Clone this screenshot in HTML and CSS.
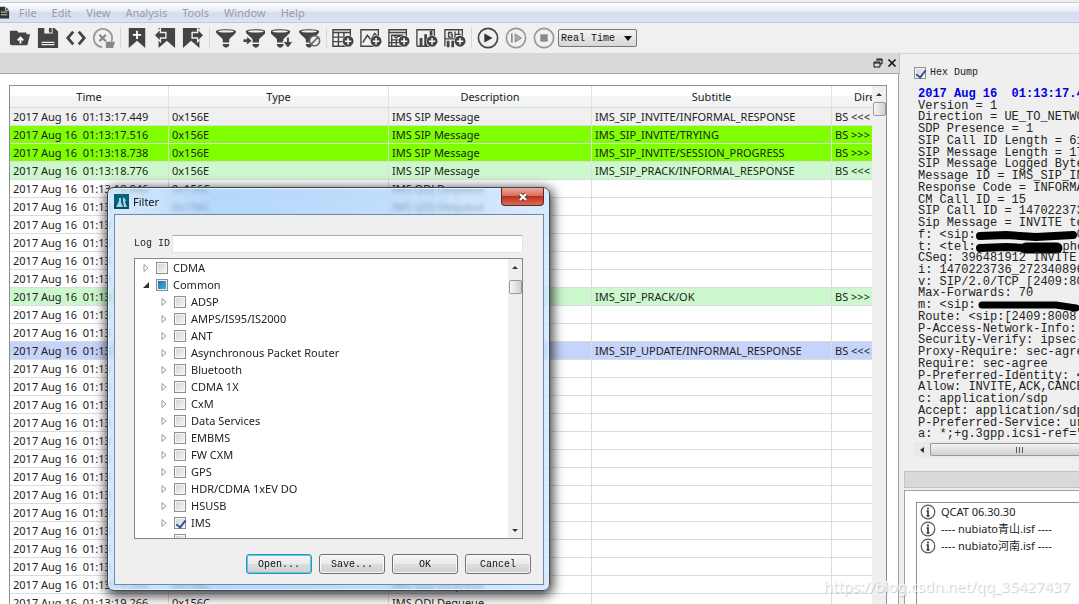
FILE: index.html
```
<!DOCTYPE html>
<html lang="en">
<head>
<meta charset="utf-8">
<title>QCAT</title>
<link rel="stylesheet" href="styles.css">
</head>
<body>
<svg class="defs" aria-hidden="true">
  <symbol id="funnel" viewBox="0 0 24 24"><path d="M1 5C1 1.500 23 1.500 23 5C23 8 15.500 12 15.500 14V17H8.500V14C8.500 12 1 8 1 5Z" fill="#444"/><ellipse cx="12" cy="4.800" rx="8.500" ry="1.300" fill="#f0f0f0"/><path d="M8.500 18.500h7v1.500q-1 2.500-3.500 2.500t-3.500-2.500Z" fill="#444"/></symbol>
  <symbol id="plus" viewBox="0 0 12 12"><circle cx="6" cy="6" r="6" fill="#f0f0f0"/><circle cx="6" cy="6" r="5.500" fill="#444"/><path d="M6 2.800v6.400M2.800 6h6.400" stroke="#fff" stroke-width="1.500"/></symbol>
  <symbol id="closed" viewBox="0 0 8 10"><path d="M2 1.500v7L6 5Z" fill="#fff" stroke="#999"/></symbol>
  <symbol id="open" viewBox="0 0 8 10"><path d="M7 2v6H1Z" fill="#333"/></symbol>
  <symbol id="info" viewBox="0 0 16 16"><circle cx="8" cy="8" r="6.800" fill="#fff" stroke="#555" stroke-width="1.200"/><path d="M8 3.500v2M6.500 7H8v4.500M6.500 12h3" stroke="#333" stroke-width="1.600" fill="none"/></symbol>
</svg>
<div class="app">
  <nav class="menu">
    <svg class="doc" viewBox="0 0 11 16"><path d="M0 1h6l4 4v9H0Z" fill="#333"/><path d="M6 1v4h4M1 7h7M1 10h7" stroke="#ddd" fill="none"/></svg>
    <a href="#">File</a><a href="#">Edit</a><a href="#">View</a><a href="#">Analysis</a><a href="#">Tools</a><a href="#">Window</a><a href="#">Help</a>
  </nav>
  <div class="toolbar">
    <button aria-label="Open"><svg viewBox="0 0 24 24"><path d="M1 4h8l1 2h9v3H5L3 19H1Z" fill="#444"/><path d="M5 8h18l-3 12H2Z" fill="#444"/><path d="M12.500 18v-5M9.500 14.500l3-3 3 3" stroke="#fff" stroke-width="2" fill="none"/></svg></button>
    <button aria-label="Save"><svg viewBox="0 0 24 24"><path d="M1 1h18l4 4v18H1Z" fill="#444"/><path d="M8 1h9v6H8ZM5 16h14v4H5Z" fill="#f0f0f0"/><path d="M13 1h3v5h-3ZM5 17.500h14v1H5Z" fill="#444"/></svg></button>
    <button aria-label="Parse"><svg viewBox="0 0 24 24"><path d="M9 5L3 12l6 7M15 5l6 7-6 7" stroke="#444" stroke-width="3" fill="none"/></svg></button>
    <button aria-label="Cancel refresh"><svg viewBox="0 0 24 24"><path d="M10 22A10 10 0 1 1 20 16" stroke="#999" stroke-width="2" fill="none"/><path d="M14 16h10l-2 7h-8Z" fill="#888"/><path d="M7 8.500l7 7M14 8.500l-7 7" stroke="#888" stroke-width="2.500"/></svg></button>
    <i></i>
    <button aria-label="Add bookmark"><svg viewBox="0 0 24 24"><path d="M3 1h18v22l-9-8-9 8Z" fill="#444"/><path d="M12 4v9M7.500 8.500h9" stroke="#fff" stroke-width="2"/></svg></button>
    <button aria-label="Previous bookmark"><svg viewBox="0 0 24 24"><path d="M5 1h18v22l-9-8-9 8Z" fill="#444"/><path d="M0 9l7-7v4h6v6H7v4Z" fill="#444" stroke="#f0f0f0" stroke-width="1.500"/></svg></button>
    <button aria-label="Next bookmark"><svg viewBox="0 0 24 24"><path d="M1 1h18v22l-9-8-9 8Z" fill="#444"/><path d="M24 9l-7-7v4h-6v6h6v4Z" fill="#444" stroke="#f0f0f0" stroke-width="1.500"/></svg></button>
    <i></i>
    <button aria-label="Filter"><svg viewBox="0 0 24 24"><use href="#funnel"/></svg></button>
    <button aria-label="Filter in"><svg viewBox="0 0 24 24"><use href="#funnel" x="2"/><path d="M0 13h4v-3l6 5-6 5v-3H0Z" fill="#444" stroke="#f0f0f0"/></svg></button>
    <button aria-label="Filter down"><svg viewBox="0 0 24 24"><use href="#funnel" x="-2"/><path d="M17 11h3v5h4l-5.500 7-5.500-7h4Z" fill="#444" stroke="#f0f0f0"/></svg></button>
    <button aria-label="Clear filter"><svg viewBox="0 0 24 24"><use href="#funnel" x="-1"/><circle cx="17" cy="15" r="5.500" fill="#f0f0f0" stroke="#666" stroke-width="1.800"/><path d="M13 19l8-8" stroke="#666" stroke-width="1.800"/></svg></button>
    <i></i>
    <button aria-label="Add table"><svg viewBox="0 0 24 24"><path d="M1 3h19v18H1ZM1 6h19M1 11h19M1 16h19M7 6v15M13 6v15" stroke="#444" stroke-width="1.500" fill="none"/><use href="#plus" x="11" y="9" width="13" height="13"/></svg></button>
    <button aria-label="Add plot"><svg viewBox="0 0 24 24"><path d="M1 3h19v18H1Z" stroke="#444" stroke-width="1.500" fill="none"/><path d="M3 17l5-8 4 5 4-7 3 3" stroke="#444" stroke-width="1.600" fill="none"/><use href="#plus" x="11" y="9" width="13" height="13"/></svg></button>
    <button aria-label="Add message view"><svg viewBox="0 0 24 24"><path d="M1 3h19v18H1ZM1 6h19M4 9h12v5H4ZM4 14v7M9 14v7M6 9l3 3 3-3 3 3M1 17h12" stroke="#444" stroke-width="1.500" fill="none"/><use href="#plus" x="11" y="9" width="13" height="13"/></svg></button>
    <button aria-label="Add histogram"><svg viewBox="0 0 24 24"><path d="M1 21V3h19v18H1" stroke="#444" stroke-width="1.500" fill="none"/><path d="M4 12h3v9H4ZM9 8h3v13H9ZM15 4h3v9h-3Z" fill="#444"/><use href="#plus" x="11" y="9" width="13" height="13"/></svg></button>
    <button aria-label="Add statistics"><svg viewBox="0 0 24 24"><path d="M1 21V3h19v18M9 6H5v5h4V8H7M12 5v7M12 8h6M16 4v5M1 13h14" stroke="#444" stroke-width="1.500" fill="none"/><path d="M3 15h3v7H3ZM8 15h3v7H8Z" fill="#444"/><use href="#plus" x="11" y="9" width="13" height="13"/></svg></button>
    <i></i>
    <button aria-label="Play"><svg viewBox="0 0 24 24"><circle cx="12" cy="12" r="10.500" fill="none" stroke="#444" stroke-width="1.800"/><path d="M8 7l9 5-9 5Z" fill="#333"/></svg></button>
    <button aria-label="Step"><svg viewBox="0 0 24 24"><circle cx="12" cy="12" r="10.500" fill="none" stroke="#999" stroke-width="1.800"/><path d="M7.500 7v10" stroke="#888" stroke-width="1.800"/><path d="M11 7.500l7 4.500-7 4.500Z" fill="#aaa" stroke="#888"/></svg></button>
    <button aria-label="Stop"><svg viewBox="0 0 24 24"><circle cx="12" cy="12" r="10.500" fill="none" stroke="#999" stroke-width="1.800"/><path d="M8 8h8v8H8Z" fill="#888"/></svg></button>
    <div class="speed"><select aria-label="Speed"><option>Real Time</option></select></div>
  </div>
  <div class="main">
    <section class="left">
      <div class="dock">
        <button aria-label="Float"><svg viewBox="0 0 10 10"><path d="M3.500 1h5.500v5H7M3 2h6.500M1 4h6v5H1ZM1 5h6" stroke="#111" fill="none"/></svg></button>
        <button aria-label="Close panel"><svg viewBox="0 0 10 10"><path d="M1.500 1.500l7 7M8.500 1.500l-7 7" stroke="#111" stroke-width="1.600"/></svg></button>
      </div>
      <div class="sheet">
        <div class="frame">
          <div class="clip">
            <table>
              <colgroup><col class="c-time"><col class="c-type"><col class="c-desc"><col class="c-sub"><col class="c-dir"></colgroup>
              <thead><tr><th>Time</th><th>Type</th><th>Description</th><th>Subtitle</th><th>Direction</th></tr></thead>
              <tbody>
                <tr class="gray"><td>2017 Aug 16&nbsp; 01:13:17.449</td><td>0x156E</td><td>IMS SIP Message</td><td>IMS_SIP_INVITE/INFORMAL_RESPONSE</td><td>BS &lt;&lt;&lt; MS</td></tr>
                <tr class="lime"><td>2017 Aug 16&nbsp; 01:13:17.516</td><td>0x156E</td><td>IMS SIP Message</td><td>IMS_SIP_INVITE/TRYING</td><td>BS &gt;&gt;&gt; MS</td></tr>
                <tr class="lime"><td>2017 Aug 16&nbsp; 01:13:18.738</td><td>0x156E</td><td>IMS SIP Message</td><td>IMS_SIP_INVITE/SESSION_PROGRESS</td><td>BS &gt;&gt;&gt; MS</td></tr>
                <tr class="mint"><td>2017 Aug 16&nbsp; 01:13:18.776</td><td>0x156E</td><td>IMS SIP Message</td><td>IMS_SIP_PRACK/INFORMAL_RESPONSE</td><td>BS &lt;&lt;&lt; MS</td></tr>
                <tr><td>2017 Aug 16&nbsp; 01:13:18.846</td><td>0x156C</td><td>IMS QDJ Dequeue</td><td></td><td></td></tr>
                <tr><td>2017 Aug 16&nbsp; 01:13</td><td>0x156C</td><td>IMS QDJ Dequeue</td><td></td><td></td></tr>
                <tr><td>2017 Aug 16&nbsp; 01:13</td><td></td><td></td><td></td><td></td></tr>
                <tr><td>2017 Aug 16&nbsp; 01:13</td><td></td><td></td><td></td><td></td></tr>
                <tr><td>2017 Aug 16&nbsp; 01:13</td><td></td><td></td><td></td><td></td></tr>
                <tr><td>2017 Aug 16&nbsp; 01:13</td><td></td><td></td><td></td><td></td></tr>
                <tr class="mint"><td>2017 Aug 16&nbsp; 01:13</td><td></td><td></td><td>IMS_SIP_PRACK/OK</td><td>BS &gt;&gt;&gt; MS</td></tr>
                <tr><td>2017 Aug 16&nbsp; 01:13</td><td></td><td></td><td></td><td></td></tr>
                <tr><td>2017 Aug 16&nbsp; 01:13</td><td></td><td></td><td></td><td></td></tr>
                <tr class="blue"><td>2017 Aug 16&nbsp; 01:13</td><td></td><td></td><td>IMS_SIP_UPDATE/INFORMAL_RESPONSE</td><td>BS &lt;&lt;&lt; MS</td></tr>
                <tr><td>2017 Aug 16&nbsp; 01:13</td><td></td><td></td><td></td><td></td></tr>
                <tr><td>2017 Aug 16&nbsp; 01:13</td><td></td><td></td><td></td><td></td></tr>
                <tr><td>2017 Aug 16&nbsp; 01:13</td><td></td><td></td><td></td><td></td></tr>
                <tr><td>2017 Aug 16&nbsp; 01:13</td><td></td><td></td><td></td><td></td></tr>
                <tr><td>2017 Aug 16&nbsp; 01:13</td><td></td><td></td><td></td><td></td></tr>
                <tr><td>2017 Aug 16&nbsp; 01:13</td><td></td><td></td><td></td><td></td></tr>
                <tr><td>2017 Aug 16&nbsp; 01:13</td><td></td><td></td><td></td><td></td></tr>
                <tr><td>2017 Aug 16&nbsp; 01:13</td><td></td><td></td><td></td><td></td></tr>
                <tr><td>2017 Aug 16&nbsp; 01:13</td><td></td><td></td><td></td><td></td></tr>
                <tr><td>2017 Aug 16&nbsp; 01:13</td><td></td><td></td><td></td><td></td></tr>
                <tr><td>2017 Aug 16&nbsp; 01:13</td><td></td><td></td><td></td><td></td></tr>
                <tr><td>2017 Aug 16&nbsp; 01:13</td><td></td><td></td><td></td><td></td></tr>
                <tr><td>2017 Aug 16&nbsp; 01:13:19.266</td><td>0x156C</td><td>IMS QDJ Dequeue</td><td></td><td></td></tr>
                <tr><td>2017 Aug 16&nbsp; 01:13:19.266</td><td>0x156C</td><td>IMS QDJ Dequeue</td><td></td><td></td></tr>
              </tbody>
            </table>
          </div>
          <div class="vbar"><span class="up"></span><span class="thumb"></span></div>
        </div>
      </div>
    </section>
    <section class="right">
      <div class="hex">
        <label class="hexlabel"><input type="checkbox" checked>Hex Dump</label>
        <div class="dump">
          <b>2017 Aug 16  01:13:17.449</b>
          <p>Version = 1</p>
          <p>Direction = UE_TO_NETWORK</p>
          <p>SDP Presence = 1</p>
          <p>SIP Call ID Length = 61</p>
          <p>SIP Message Length = 17</p>
          <p>SIP Message Logged Bytes</p>
          <p>Message ID = IMS_SIP_INVITE</p>
          <p>Response Code = INFORMAL</p>
          <p>CM Call ID = 15</p>
          <p>SIP Call ID = 1470223736</p>
          <p>Sip Message = INVITE tel</p>
          <p>f: &lt;sip:<svg class="ink long" viewBox="0 0 101 11"><path d="M4 6L30 5L60 7L97 5" stroke="#000" stroke-width="8" stroke-linecap="round" fill="none"/></svg>0</p>
          <p>t: &lt;tel:<svg class="ink" viewBox="0 0 87 11"><path d="M4 6L30 5L50 6" stroke="#000" stroke-width="8" stroke-linecap="round" fill="none"/><path d="M50 6H81" stroke="#000" stroke-width="11" stroke-linecap="round"/></svg>phone</p>
          <p>CSeq: 396481912 INVITE</p>
          <p>i: 1470223736_2723408960</p>
          <p>v: SIP/2.0/TCP [2409:8008</p>
          <p>Max-Forwards: 70</p>
          <p>m: &lt;sip:<svg class="ink long" viewBox="0 0 101 11"><path d="M6 5H80L100 8" stroke="#000" stroke-width="7" stroke-linecap="round" fill="none"/></svg></p>
          <p>Route: &lt;sip:[2409:8008:</p>
          <p>P-Access-Network-Info: 3</p>
          <p>Security-Verify: ipsec-3</p>
          <p>Proxy-Require: sec-agree</p>
          <p>Require: sec-agree</p>
          <p>P-Preferred-Identity: &lt;s</p>
          <p>Allow: INVITE,ACK,CANCEL</p>
          <p>c: application/sdp</p>
          <p>Accept: application/sdp</p>
          <p>P-Preferred-Service: urn</p>
          <p>a: *;+g.3gpp.icsi-ref="u</p>
        </div>
        <div class="hbar"><span class="lt"></span><span class="hthumb"><em></em></span></div>
      </div>
      <div class="dock2"></div>
      <div class="logs">
        <ul>
          <li><svg><use href="#info"/></svg>QCAT 06.30.30</li>
          <li><svg><use href="#info"/></svg>---- nubiato青山.isf ----</li>
          <li><svg><use href="#info"/></svg>---- nubiato河南.isf ----</li>
        </ul>
      </div>
    </section>
  </div>
</div>

<div class="dialog" role="dialog" aria-labelledby="dlg-title">
  <header>
    <svg viewBox="0 0 15 15"><path d="M0 0h15v15H0Z" fill="#07607c"/><path d="M0 10L15 7v8H0Z" fill="#0a4c68"/><path d="M2 13l3-6v-3h2v4l2 5ZM9 3l3 3-1 2 2 5h-3L9 8Z" fill="#9fd6df"/></svg>
    <h1 id="dlg-title">Filter</h1>
    <button class="x" aria-label="Close"><svg viewBox="0 0 12 10"><path d="M3 2l6 6M9 2L3 8" stroke="#5c2f2a" stroke-width="4"/><path d="M3 2l6 6M9 2L3 8" stroke="#fff" stroke-width="2.400"/></svg></button>
  </header>
  <div class="body">
    <div class="logid"><label for="logid">Log ID</label><input id="logid" type="text"></div>
    <div class="tree">
      <div class="items">
        <label><svg><use href="#closed"/></svg><input type="checkbox">CDMA</label>
        <label><svg><use href="#open"/></svg><input type="checkbox" class="part">Common</label>
        <label class="sub"><svg><use href="#closed"/></svg><input type="checkbox">ADSP</label>
        <label class="sub"><svg><use href="#closed"/></svg><input type="checkbox">AMPS/IS95/IS2000</label>
        <label class="sub"><svg><use href="#closed"/></svg><input type="checkbox">ANT</label>
        <label class="sub"><svg><use href="#closed"/></svg><input type="checkbox">Asynchronous Packet Router</label>
        <label class="sub"><svg><use href="#closed"/></svg><input type="checkbox">Bluetooth</label>
        <label class="sub"><svg><use href="#closed"/></svg><input type="checkbox">CDMA 1X</label>
        <label class="sub"><svg><use href="#closed"/></svg><input type="checkbox">CxM</label>
        <label class="sub"><svg><use href="#closed"/></svg><input type="checkbox">Data Services</label>
        <label class="sub"><svg><use href="#closed"/></svg><input type="checkbox">EMBMS</label>
        <label class="sub"><svg><use href="#closed"/></svg><input type="checkbox">FW CXM</label>
        <label class="sub"><svg><use href="#closed"/></svg><input type="checkbox">GPS</label>
        <label class="sub"><svg><use href="#closed"/></svg><input type="checkbox">HDR/CDMA 1xEV DO</label>
        <label class="sub"><svg><use href="#closed"/></svg><input type="checkbox">HSUSB</label>
        <label class="sub"><svg><use href="#closed"/></svg><input type="checkbox" checked>IMS</label>
        <label class="sub"><svg></svg><input type="checkbox"></label>
      </div>
      <div class="vbar"><span class="up"></span><span class="thumb"></span><span class="down"></span></div>
    </div>
    <div class="buttons"><button class="default">Open...</button><button>Save...</button><button>OK</button><button>Cancel</button></div>
  </div>
</div>
<div class="watermark">https://blog.csdn.net/qq_35427437</div>
</body>
</html>
```

FILE: styles.css
```
* { box-sizing: border-box; }
body { margin: 0; height: 100vh; overflow: hidden; position: relative; background: #efefef; color: #222; font: 11px/17px "Noto Sans", "Noto Sans CJK SC", sans-serif; }
button { padding: 0; border: 0; background: none; }
p, ul, h1 { margin: 0; padding: 0; }
.defs { position: absolute; width: 0; height: 0; }
.app { height: 100%; display: flex; flex-direction: column; }

.menu { flex: none; margin-top: 2px; height: 21px; border-top: 1px solid #c9cdd4; border-bottom: 1px solid #c0c7d6; background: linear-gradient(#fff 0, #e8ecf6 40%, #d5dcee 55%, #dbe2f3 100%); display: flex; align-items: center; gap: 15px; }
.menu a { color: #9a9ca5; text-decoration: none; }
.menu .doc { width: 10px; height: 16px; margin-right: -6px; }

.toolbar { flex: none; height: 31px; padding-left: 6px; display: flex; align-items: center; background: #f0f0f0; border-bottom: 1px solid #d4d4d4; }
.toolbar button { width: 28px; height: 24px; display: flex; align-items: center; justify-content: center; }
.toolbar svg { width: 22px; height: 22px; }
.toolbar i { width: 1px; height: 22px; margin: 0 2px; background: #d8d8d8; }
.speed { position: relative; display: flex; }
.speed::after { content: ""; position: absolute; right: 5px; top: 7px; border: 4px solid transparent; border-top: 5px solid #111; border-bottom: 0; pointer-events: none; }
.speed select { width: 79px; height: 18px; padding: 0 2px; border: 1px solid #777; border-radius: 2px; appearance: none; color: #111; font: 10px "Liberation Mono", monospace; background: linear-gradient(#f4f4f4, #d6d6d6); }

.main { flex: 1; min-height: 0; display: grid; grid-template-columns: minmax(0, 900fr) minmax(0, 179fr); }
.left { display: flex; flex-direction: column; min-height: 0; }
.dock { flex: none; height: 20px; background: #d9d9d9; border-bottom: 1px solid #a9a9a9; border-right: 1px solid #c4c4c4; display: flex; justify-content: flex-end; align-items: center; gap: 4px; padding: 0 2px 1px 0; }
.dock button { width: 10px; height: 10px; display: flex; }
.dock svg { width: 10px; height: 10px; }
.sheet { flex: 1; min-height: 0; background: #fff; border-right: 1px solid #a0a0a0; margin-right: 1px; padding: 11px 11px 0 9px; }
.frame { height: 100%; border: 1px solid #8a8f94; border-bottom: 0; display: flex; }
.clip { flex: 1; min-width: 0; overflow: hidden; }
table { table-layout: fixed; width: 914px; border-collapse: separate; border-spacing: 0; }
.c-time { width: 159px; } .c-type { width: 220px; } .c-desc { width: 203px; } .c-sub { width: 240px; } .c-dir { width: 92px; }
th { height: 22px; padding: 0; font-weight: 400; background: linear-gradient(#fff, #fff 45%, #f4f5f6 50%, #f2f3f4); border-right: 1px solid #dfe2e6; border-bottom: 1px solid #d9d9d9; }
td { height: 18px; padding: 0 3px; line-height: 16px; white-space: nowrap; border-right: 1px solid #dcdcdc; border-bottom: 1px solid #dcdcdc; }
.gray td { background: #f0f0f0; }
.lime td { background: #80ff00; }
.mint td { background: #cdf8cd; }
.blue td { background: #c6d3fb; }

.vbar { width: 14px; background: #efefef; display: flex; flex-direction: column; align-items: center; }
.up, .down { flex: none; width: 0; border: 3px solid transparent; border-top: 0; border-bottom: 3px solid #333; margin: 7px 0 6px; }
.down { border-bottom: 0; border-top: 3px solid #333; margin-top: auto; }
.thumb { flex: none; width: 13px; height: 14px; border: 1px solid #999; border-radius: 2px; background: linear-gradient(90deg, #f6f6f6, #cfcfcf); }

.right { min-width: 0; overflow: hidden; display: flex; flex-direction: column; padding-left: 4px; }
.hex { height: 417px; flex: none; padding: 10px 0 14px 10px; display: flex; flex-direction: column; }
.hexlabel { height: 18px; flex: none; display: flex; align-items: center; gap: 4px; font: 10px/16px "Liberation Mono", monospace; }
input[type=checkbox] { appearance: none; flex: none; margin: 0; width: 12px; height: 12px; border: 1px solid #8d8f91; background: linear-gradient(135deg, #cfd2d6, #f7f7f7); box-shadow: inset 0 0 0 1px #f6f6f6; display: block; }
input[type=checkbox]:checked::after { content: ""; display: block; width: 4px; height: 8px; margin: 0 0 0 3px; border: solid #3c519c; border-width: 0 2px 2px 0; transform: rotate(38deg); }
input[type=checkbox].part { background: linear-gradient(135deg, #1c6ea8, #48b4e4); box-shadow: inset 0 0 0 1px #e4eef4; }
.dump { flex: 1; min-height: 0; margin: 7px 0 1px 4px; display: grid; grid-auto-rows: minmax(0, 1fr); font: 12px/11px "Liberation Mono", monospace; white-space: pre; }
.dump b { color: #00d; }
.ink { width: 87px; height: 11px; vertical-align: top; overflow: visible; }
.ink.long { width: 101px; }
.hbar { height: 15px; flex: none; display: flex; align-items: center; background: #e9e9e9; }
.lt { border: 3px solid transparent; border-left: 0; border-right: 4px solid #333; margin: 0 6px; }
.hthumb { flex: 1; height: 13px; border: 1px solid #999; border-right: 0; border-radius: 2px 0 0 2px; background: linear-gradient(#f4f4f4, #d0d0d0); display: flex; align-items: center; padding-left: 85px; }
.hthumb em { width: 7px; height: 6px; background: repeating-linear-gradient(90deg, #555 0 1px, transparent 1px 3px); }
.dock2 { height: 17px; flex: none; background: #d9d9d9; border: 1px solid #c2c2c2; border-right: 0; }
.logs { flex: 1; min-height: 0; margin-top: 2px; background: #fff; border: 1px solid #a0a0a0; border-width: 1px 0 0 1px; padding: 11px 0 0 11px; }
.logs ul { list-style: none; height: 100%; border: 1px solid #8a8f94; border-width: 1px 0 0 1px; }
.logs li { display: flex; align-items: center; gap: 5px; padding-left: 3px; height: 17px; white-space: nowrap; }
.logs svg { width: 16px; height: 16px; }

.dialog { position: absolute; left: 107px; top: 187px; width: 443px; padding: 0 5px 5px 6px; border: 1px solid #3c4654; border-radius: 7px; background: linear-gradient(90deg, rgba(200,226,252,.7), rgba(150,200,250,.7) 25%, rgba(165,207,251,.7) 60%, rgba(200,226,252,.7)); backdrop-filter: blur(2px); box-shadow: inset 0 0 0 1px #e4f2ff, 1px 3px 12px 2px rgba(0,0,0,.75); }
.dialog header { height: 26px; display: flex; align-items: center; gap: 4px; }
.dialog header > svg { width: 15px; height: 15px; }
.dialog h1 { flex: 1; font-size: 11px; line-height: 17px; font-weight: 400; color: #111; }
.x { align-self: flex-start; width: 43px; height: 18px; border: 1px solid #5a2a2a; border-top: 0; border-radius: 0 0 4px 4px; background: linear-gradient(#eba79b, #d9705c 45%, #bd301b 50%, #dc6b54); display: flex; align-items: center; justify-content: center; }
.x svg { width: 12px; height: 10px; }
.body { border: 1px solid #6f8aa6; background: #efefef; padding: 20px 20px 10px 19px; }
.logid { display: flex; align-items: center; gap: 5px; font: 10px/18px "Liberation Mono", monospace; }
.logid label { width: 33px; white-space: nowrap; }
.logid input { flex: 1; min-width: 0; height: 18px; border: 1px solid #e0e3e8; border-top-color: #abadb3; border-radius: 1px; background: #fff; }
.tree { margin-top: 5px; height: 281px; border: 1px solid #828790; background: #fff; display: flex; overflow: hidden; }
.items { flex: 1; }
.items label { display: flex; align-items: center; gap: 6px; height: 17px; padding-left: 7px; }
.items label.sub { padding-left: 25px; }
.items svg { width: 8px; height: 10px; }
.items input { margin-right: -1px; }
.tree .thumb { margin-top: 5px; }
.buttons { display: flex; justify-content: flex-end; gap: 7px; margin: 15px -8px 0 0; }
.buttons button { width: 66px; height: 20px; border: 1px solid #707070; border-radius: 3px; background: linear-gradient(#f4f4f4, #ebebeb 48%, #ddd 52%, #d0d0d0); box-shadow: inset 0 0 0 1px #fafafa; color: #111; font: 10px "Liberation Mono", monospace; }
.buttons .default { border-color: #2f93bb; box-shadow: inset 0 0 0 1px #5cc8ec; }
.watermark { position: absolute; right: 9px; bottom: 6px; font-size: 15px; line-height: 24px; color: rgba(255,255,255,.85); text-shadow: 1px 1px 1px rgba(120,120,120,.4); }
```
